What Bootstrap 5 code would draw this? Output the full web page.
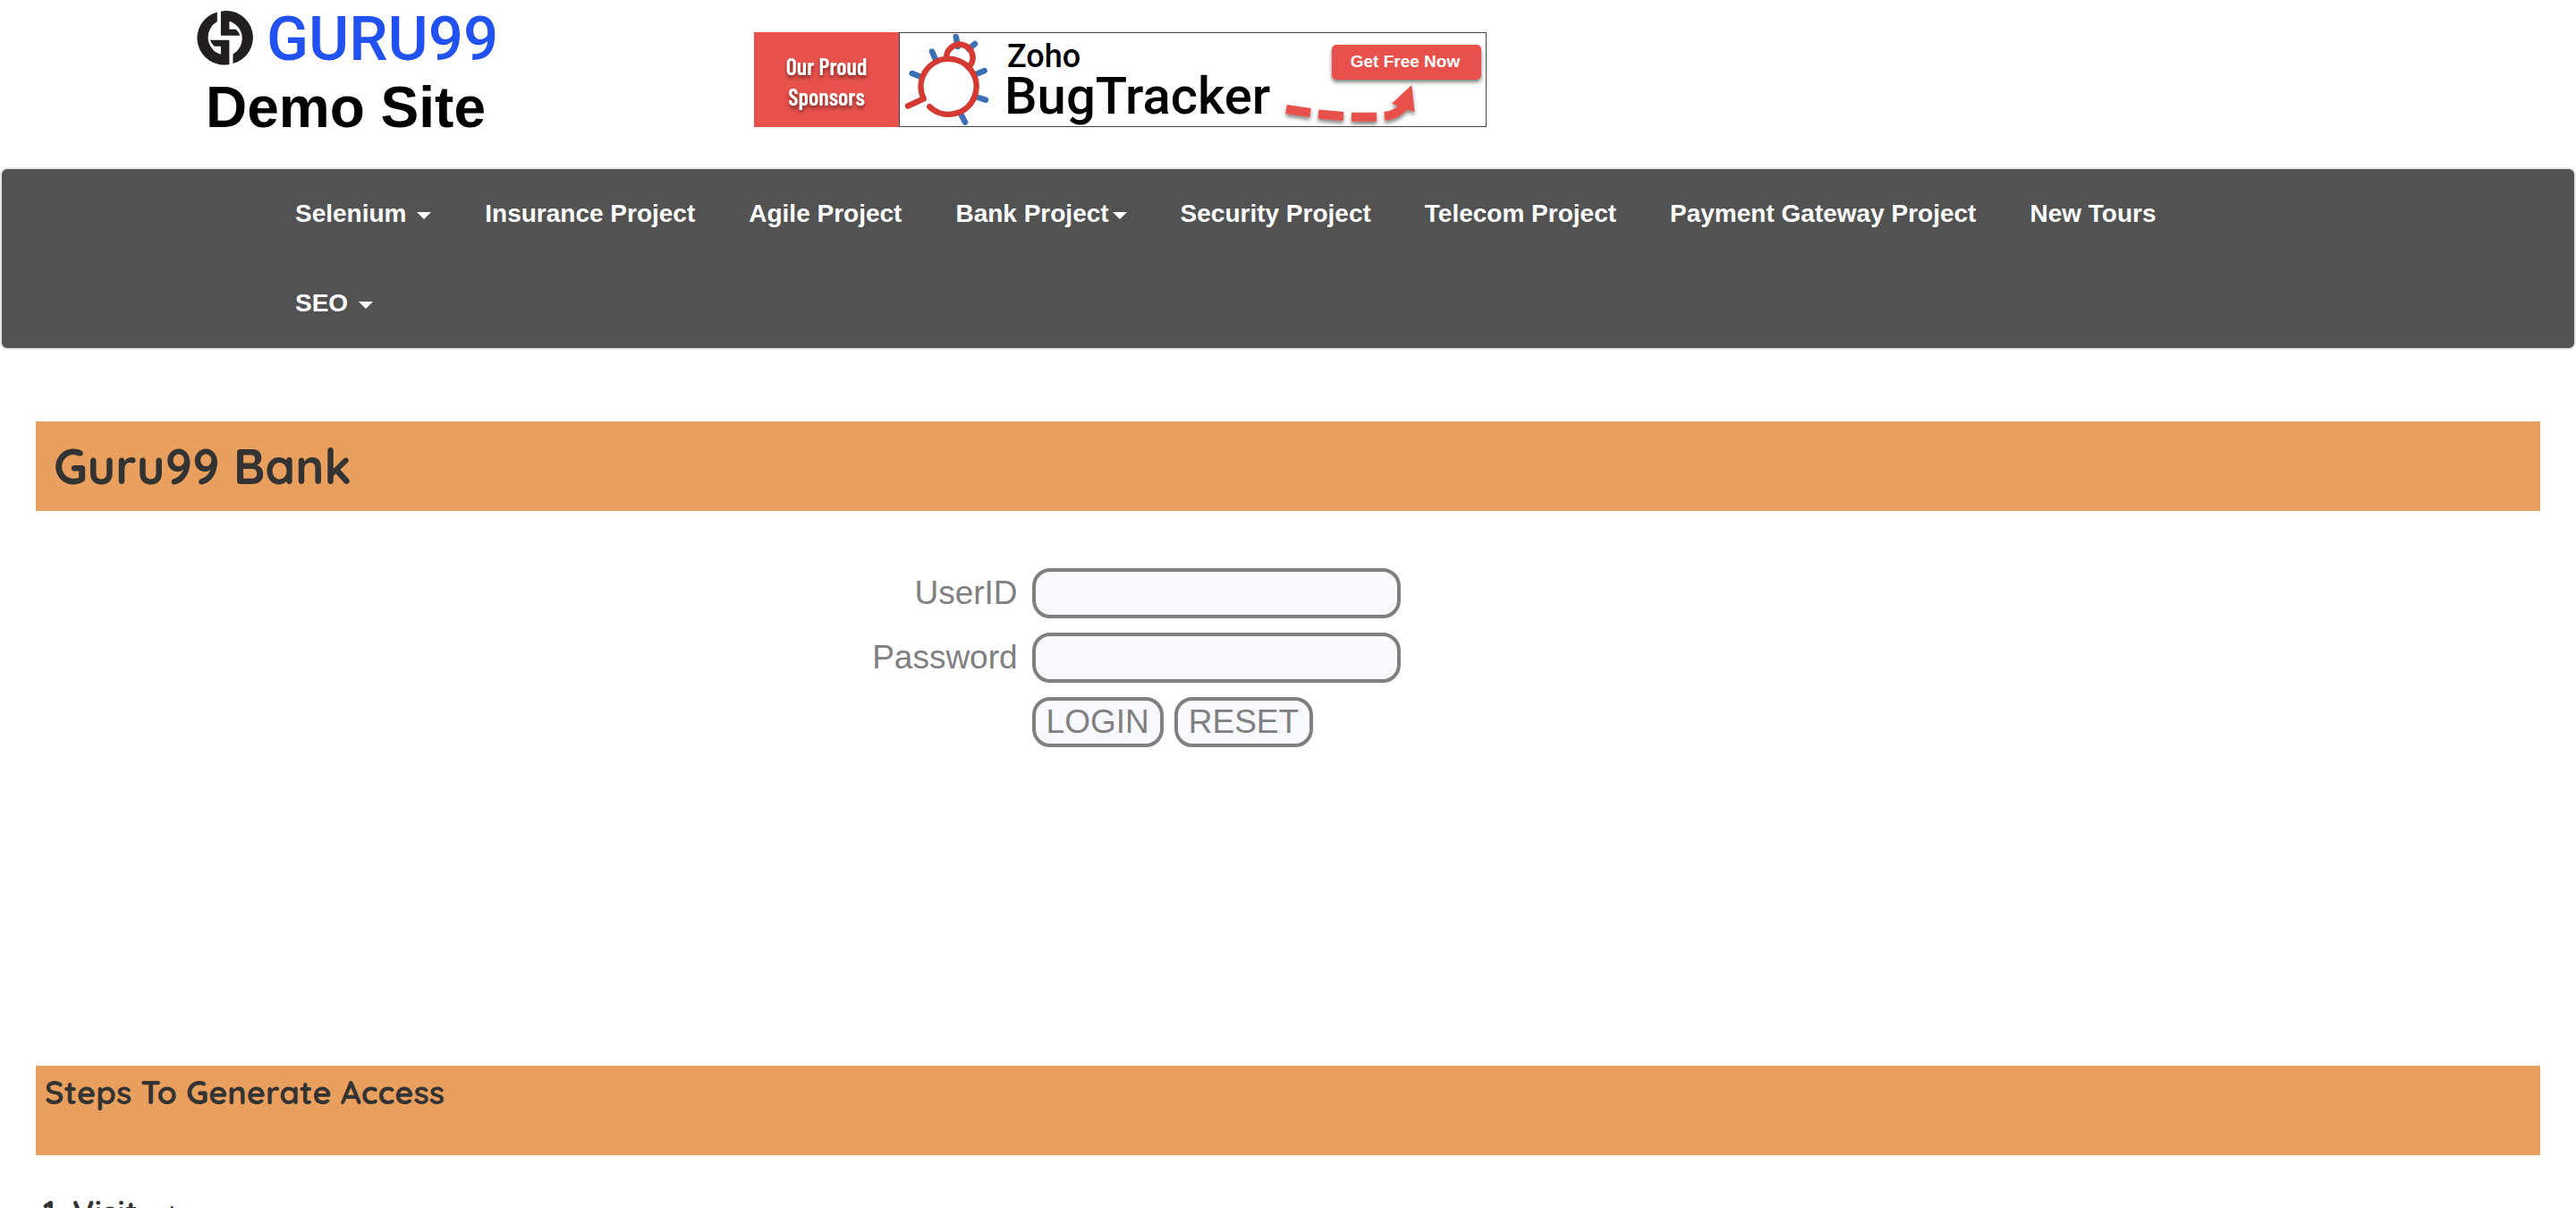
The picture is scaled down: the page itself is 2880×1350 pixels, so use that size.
<!DOCTYPE html>
<html lang="en">
<head>
<meta charset="utf-8">
<meta name="viewport" content="width=device-width, initial-scale=1">
<title>Guru99 Bank Home Page</title>
<link href="https://cdn.jsdelivr.net/npm/bootstrap@5.3.0/dist/css/bootstrap.min.css" rel="stylesheet">
<style>
  body { font-family: "Liberation Sans", Arial, sans-serif; font-size: 28px; line-height: 40px; color: #333; background: #fff; overflow-x: hidden; }
  .wrap-head { max-width: 2480px; min-height: 187px; }
  .brand-title { font-size: 64px; line-height: 72px; font-weight: 700; color: #000; padding-left: 30px; }
  .sponsor { padding: 36px 0 0 23px; }
  .site-nav { background: #525252; border: 2px solid #e7e7e7; border-radius: 8px; }
  .wrap-nav { max-width: 2280px; }
  .site-nav .nav-link { padding: 30px; line-height: 40px; font-weight: 700; color: #fff; }
  .site-nav .dropdown-toggle::after { border-top: 8px solid; border-right: 8px solid transparent; border-left: 8px solid transparent; margin-left: 4px; vertical-align: middle; }
  .main-area { padding: 80px 40px 0; }
  .band { background: #e99f5e; min-height: 100px; font-family: Quicksand, Lato, sans-serif; font-weight: 700; }
  .band-title { font-size: 54px; line-height: 60px; padding: 20px; }
  .band-steps { font-size: 36px; line-height: 40px; padding: 10px; }
  .steps { font-family: Quicksand, Lato, sans-serif; font-weight: 700; font-size: 36px; line-height: 40px; padding: 44px 8px 0; }
  .steps a { font-family: "Liberation Sans", Arial, sans-serif; font-weight: 400; font-size: 28px; color: #333; text-decoration: none; }
  .login-area { min-height: 620px; padding-top: 64px; }
  .login-grid { display: grid; grid-template-columns: 39.2% 1fr; gap: 16px; }
  .login-grid, .field, .pill { font-size: 37px; line-height: 48px; color: #808080; }
  .field, .pill { height: 56px; border: 4px solid #808080; border-radius: 20px; background: #f8f8ff; padding: 0 12px; }
  .field { width: 412px; }
  .pill-row { gap: 12px; }
</style>
</head>
<body>
<header class="wrap-head mx-auto">
  <div class="row g-0">
    <div class="col-3">
      <svg class="d-block" width="360" height="84" viewBox="200 0 360 84" role="img" aria-label="Guru99">
        <g transform="translate(217 7) scale(.315)" fill="#231f20">
          <path d="M82 21A95 95 0 0 0 125 206V120H57Q60 132 72 142H95V171A64 64 0 0 1 82 54Z"/>
          <path transform="rotate(180 110 112)" d="M82 21A95 95 0 0 0 125 206V120H57Q60 132 72 142H95V171A64 64 0 0 1 82 54Z"/>
        </g>
        <text x="298" y="67" font-family="Roboto, sans-serif" font-weight="500" font-size="69" fill="#2152ef">GURU99</text>
      </svg>
      <div class="brand-title">Demo Site</div>
    </div>
    <div class="col-9 sponsor">
      <a href="#" class="d-block" aria-label="Zoho BugTracker, Get Free Now">
        <svg class="d-block" width="819" height="106" viewBox="843 36 819 106">
          <defs><filter id="sh" x="-20%" y="-20%" width="140%" height="160%"><feDropShadow dx="0" dy="3" stdDeviation="2" flood-opacity=".5"/></filter></defs>
          <rect x="1005.500" y="36.500" width="656" height="105" fill="#fff" stroke="#444"/>
          <path fill="#e8514b" d="M843 36h162v106H843z"/>
          <g fill="#fff" font-family="'Barlow Condensed', Roboto, sans-serif" font-weight="600" font-size="26" text-anchor="middle" filter="url(#sh)">
            <text x="924" y="84">Our Proud</text><text x="924" y="118">Sponsors</text>
          </g>
          <path d="M1068.700 41L1071 52M1090 49L1083 55M1042 57.500L1047 69M1019.700 82L1030 86M1100.700 79L1091 83M1102 111.700L1092 108.500M1079 136.500L1074 127" stroke="#3b70b5" stroke-width="6.500" stroke-linecap="round"/>
          <g fill="none" stroke="#d43a32" stroke-width="6.500" stroke-linecap="round" stroke-linejoin="round">
            <path d="M1015 118.500L1032.700 110.300A31 31 0 1 1 1039.300 119.300"/>
            <path d="M1058.300 66A14.700 14.700 0 1 1 1084 74"/>
          </g>
          <g fill="#000" font-family="Roboto, sans-serif" font-weight="500">
            <text x="1126" y="75" font-size="36">Zoho</text><text x="1123" y="127" font-size="58">BugTracker</text>
          </g>
          <g filter="url(#sh)">
            <rect x="1489" y="50" width="167" height="39" rx="5" fill="#e8514b"/>
            <path d="M1438 122L1465 126M1474 127.500L1502 130M1511 130.700H1539M1548 130Q1564 128 1573 115" fill="none" stroke="#e8514b" stroke-width="10"/>
            <path d="M1578.300 95L1581.500 125.300L1556 115.700Z" fill="#e8514b"/>
          </g>
          <text x="1571" y="75" fill="#fff" text-anchor="middle" font-family="'Liberation Sans', sans-serif" font-weight="700" font-size="19">Get Free Now</text>
        </svg>
      </a>
    </div>
  </div>
</header>
<nav class="site-nav" aria-label="Main">
  <ul class="nav wrap-nav mx-auto">
    <li class="nav-item"><a class="nav-link dropdown-toggle" href="#">Selenium </a></li>
    <li class="nav-item"><a class="nav-link" href="#">Insurance Project</a></li>
    <li class="nav-item"><a class="nav-link" href="#">Agile Project</a></li>
    <li class="nav-item"><a class="nav-link dropdown-toggle" href="#">Bank Project</a></li>
    <li class="nav-item"><a class="nav-link" href="#">Security Project</a></li>
    <li class="nav-item"><a class="nav-link" href="#">Telecom Project</a></li>
    <li class="nav-item"><a class="nav-link" href="#">Payment Gateway Project</a></li>
    <li class="nav-item"><a class="nav-link" href="#">New Tours</a></li>
    <li class="nav-item"><a class="nav-link dropdown-toggle" href="#">SEO </a></li>
  </ul>
</nav>
<main class="main-area">
  <h2 class="band band-title m-0">Guru99 Bank</h2>
  <form class="login-area">
    <div class="login-grid">
      <label for="uid" class="text-end align-self-center">UserID</label>
      <div class="d-flex"><input id="uid" type="text" class="field"></div>
      <label for="pwd" class="text-end align-self-center">Password</label>
      <div class="d-flex"><input id="pwd" type="password" class="field"></div>
      <span></span>
      <div class="d-flex pill-row">
        <button type="button" class="pill">LOGIN</button>
        <button type="reset" class="pill">RESET</button>
      </div>
    </div>
  </form>
  <h3 class="band band-steps m-0">Steps To Generate Access</h3>
  <p class="steps mb-0">1. Visit - <a href="#">here</a></p>
</main>
<script src="https://cdn.jsdelivr.net/npm/bootstrap@5.3.0/dist/js/bootstrap.bundle.min.js"></script>
</body>
</html>
